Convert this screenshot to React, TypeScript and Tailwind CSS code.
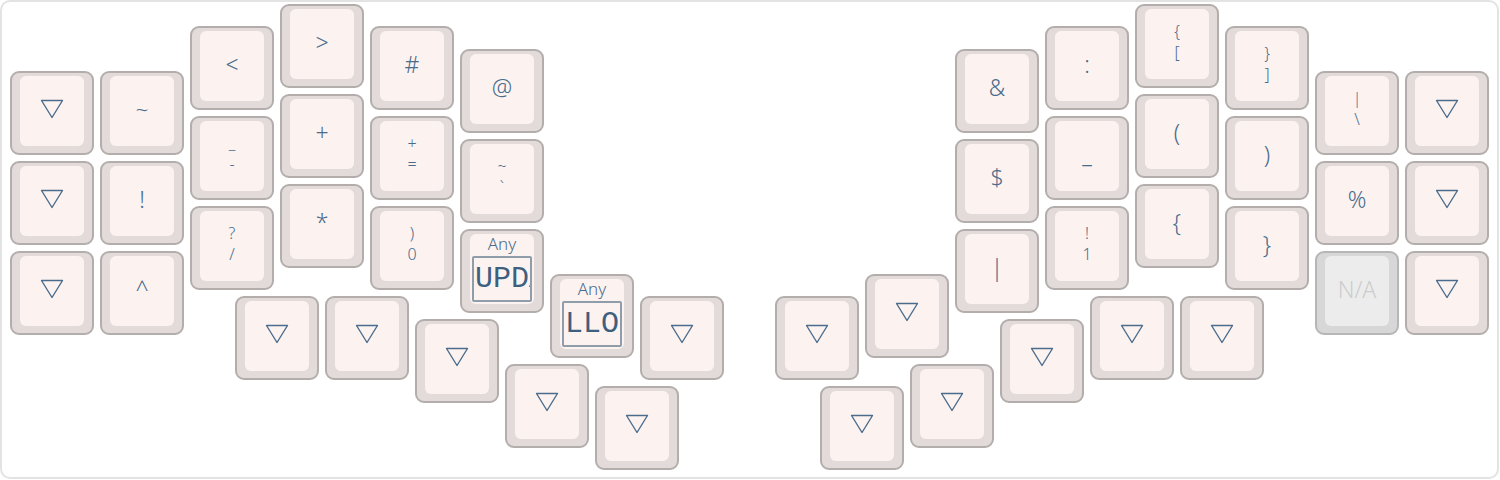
import React from 'react';

type KeyDef = {
  x: number;
  y: number;
  label?: string[];
  tri?: boolean;
  any?: string;
  na?: boolean;
};

// positions are the key's top-left corner on the board, in px
const keys: KeyDef[] = [
  // left half
  { x: 10, y: 71, tri: true },
  { x: 10, y: 161, tri: true },
  { x: 10, y: 251, tri: true },
  { x: 100, y: 71, label: ['~'] },
  { x: 100, y: 161, label: ['!'] },
  { x: 100, y: 251, label: ['^'] },
  { x: 190, y: 26, label: ['<'] },
  { x: 190, y: 116, label: ['_', '-'] },
  { x: 190, y: 206, label: ['?', '/'] },
  { x: 280, y: 4, label: ['>'] },
  { x: 280, y: 94, label: ['+'] },
  { x: 280, y: 184, label: ['*'] },
  { x: 370, y: 26, label: ['#'] },
  { x: 370, y: 116, label: ['+', '='] },
  { x: 370, y: 206, label: [')', '0'] },
  { x: 460, y: 49, label: ['@'] },
  { x: 460, y: 139, label: ['~', '`'] },
  { x: 460, y: 229, any: 'UPDATE' },
  // left thumbs
  { x: 235, y: 296, tri: true },
  { x: 325, y: 296, tri: true },
  { x: 415, y: 319, tri: true },
  { x: 505, y: 364, tri: true },
  { x: 550, y: 274, any: 'LLOCK' },
  { x: 595, y: 386, tri: true },
  { x: 640, y: 296, tri: true },
  // right thumbs
  { x: 775, y: 296, tri: true },
  { x: 865, y: 274, tri: true },
  { x: 820, y: 386, tri: true },
  { x: 910, y: 364, tri: true },
  { x: 1000, y: 319, tri: true },
  { x: 1090, y: 296, tri: true },
  { x: 1180, y: 296, tri: true },
  // right half
  { x: 955, y: 49, label: ['&'] },
  { x: 955, y: 139, label: ['$'] },
  { x: 955, y: 229, label: ['|'] },
  { x: 1045, y: 26, label: [':'] },
  { x: 1045, y: 116, label: ['_'] },
  { x: 1045, y: 206, label: ['!', '1'] },
  { x: 1135, y: 4, label: ['{', '['] },
  { x: 1135, y: 94, label: ['('] },
  { x: 1135, y: 184, label: ['{'] },
  { x: 1225, y: 26, label: ['}', ']'] },
  { x: 1225, y: 116, label: [')'] },
  { x: 1225, y: 206, label: ['}'] },
  { x: 1315, y: 71, label: ['|', '\\'] },
  { x: 1315, y: 161, label: ['%'] },
  { x: 1315, y: 251, na: true },
  { x: 1405, y: 71, tri: true },
  { x: 1405, y: 161, tri: true },
  { x: 1405, y: 251, tri: true },
];

const Triangle = () => (
  <svg width="24" height="20" viewBox="0 0 24 20" className="-mt-1">
    <path d="M1.5 1.5 H22.5 L12 18.5 Z" fill="none" stroke="#4b6c8c" strokeWidth="1.4" strokeLinejoin="round" />
  </svg>
);

const Key = ({ k }: { k: KeyDef }) => {
  const outer = k.na ? 'bg-[#d7d7d7] border-[#b6b6b6]' : 'bg-[#e3dbd9] border-[#b3aeac]';
  const inner = k.na ? 'bg-[#ececec]' : 'bg-[#fcf3f1]';

  return (
    <div
      className={`absolute w-[84px] h-[84px] rounded-[9px] border-2 ${outer} pl-[8px] pr-[8px] pt-[3px] pb-[7px]`}
      style={{ left: k.x, top: k.y }}
    >
      <div className={`w-full h-full rounded-[6px] ${inner} flex flex-col items-center justify-center text-[#4b6c8c]`}>
        {k.tri && <Triangle />}
        {k.na && <span className="text-[23px] text-[#cdcdcd] -mt-1">N/A</span>}
        {k.label && k.label.length === 1 && (
          <span className="text-[23px] leading-none -mt-1">{k.label[0]}</span>
        )}
        {k.label && k.label.length === 2 && (
          <div className="flex flex-col items-center text-[16px] leading-[21px] -mt-1">
            <span>{k.label[0]}</span>
            <span>{k.label[1]}</span>
          </div>
        )}
        {k.any && (
          <div className="w-full h-full flex flex-col items-center justify-between px-[2px] pb-[2px]">
            <span className="text-[17px] leading-[20px]">Any</span>
            <div className="w-full h-[46px] border-2 border-[#8f9dab] rounded-[2px] overflow-hidden flex items-center pl-[1px]">
              <span className="text-[30px] leading-none whitespace-nowrap text-[#3f5f7f]" style={{ fontFamily: '"Liberation Mono", monospace' }}>
                {k.any}
              </span>
            </div>
          </div>
        )}
      </div>
    </div>
  );
};

export default function App() {
  return (
    <div className="w-[1500px] h-[480px] bg-white font-light" style={{ fontFamily: '"Noto Sans", "Open Sans", sans-serif' }}>
      <div className="relative w-[1499px] h-[479px] rounded-[10px] border-2 border-[#e3e3e3] bg-white">
        <div className="absolute -left-[2px] -top-[2px]">
          {keys.map((k, i) => (
            <Key key={i} k={k} />
          ))}
        </div>
      </div>
    </div>
  );
}
